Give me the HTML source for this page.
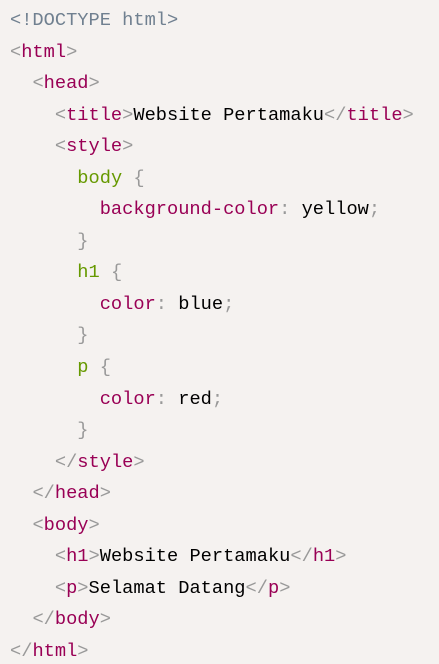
<!DOCTYPE html>
<html><head><style>
html,body{margin:0;padding:0;background:#f5f2f0;width:439px;height:664px;overflow:hidden}
pre{margin:0;padding:5px 0 0 10px;font-family:"Liberation Mono","DejaVu Sans Mono",monospace;font-size:18.7px;line-height:31.55px;color:#000}
.p{color:#999}.t{color:#905}.d{color:#708090}.s{color:#690}
</style></head><body><pre><span class="d">&lt;!DOCTYPE html&gt;</span>
<span class="p">&lt;</span><span class="t">html</span><span class="p">&gt;</span>
  <span class="p">&lt;</span><span class="t">head</span><span class="p">&gt;</span>
    <span class="p">&lt;</span><span class="t">title</span><span class="p">&gt;</span>Website Pertamaku<span class="p">&lt;/</span><span class="t">title</span><span class="p">&gt;</span>
    <span class="p">&lt;</span><span class="t">style</span><span class="p">&gt;</span>
      <span class="s">body</span> <span class="p">{</span>
        <span class="t">background-color</span><span class="p">:</span> yellow<span class="p">;</span>
      <span class="p">}</span>
      <span class="s">h1</span> <span class="p">{</span>
        <span class="t">color</span><span class="p">:</span> blue<span class="p">;</span>
      <span class="p">}</span>
      <span class="s">p</span> <span class="p">{</span>
        <span class="t">color</span><span class="p">:</span> red<span class="p">;</span>
      <span class="p">}</span>
    <span class="p">&lt;/</span><span class="t">style</span><span class="p">&gt;</span>
  <span class="p">&lt;/</span><span class="t">head</span><span class="p">&gt;</span>
  <span class="p">&lt;</span><span class="t">body</span><span class="p">&gt;</span>
    <span class="p">&lt;</span><span class="t">h1</span><span class="p">&gt;</span>Website Pertamaku<span class="p">&lt;/</span><span class="t">h1</span><span class="p">&gt;</span>
    <span class="p">&lt;</span><span class="t">p</span><span class="p">&gt;</span>Selamat Datang<span class="p">&lt;/</span><span class="t">p</span><span class="p">&gt;</span>
  <span class="p">&lt;/</span><span class="t">body</span><span class="p">&gt;</span>
<span class="p">&lt;/</span><span class="t">html</span><span class="p">&gt;</span></pre></body></html>
